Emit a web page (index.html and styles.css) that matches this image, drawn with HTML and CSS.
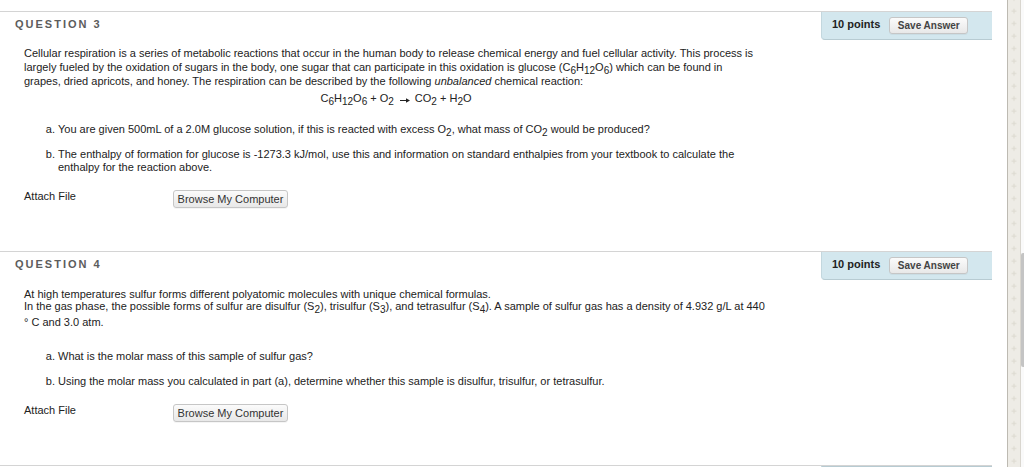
FILE: index.html
```html
<!DOCTYPE html>
<html lang="en">
<head>
<meta charset="utf-8">
<title>Questions</title>
<link rel="stylesheet" href="styles.css">
</head>
<body>
<div class="screen">
  <main class="page">
    <section class="question">
      <header class="q-head">
        <h2 class="q-title">QUESTION 3</h2>
        <div class="q-points"><span class="points">10 points</span><button class="btn btn-save">Save Answer</button></div>
      </header>
      <div class="q-body">
        <p class="prompt">Cellular respiration is a series of metabolic reactions that occur in the human body to release chemical energy and fuel cellular activity. This process is<br>largely fueled by the oxidation of sugars in the body, one sugar that can participate in this oxidation is glucose (C<sub>6</sub>H<sub>12</sub>O<sub>6</sub>) which can be found in<br>grapes, dried apricots, and honey. The respiration can be described by the following <em>unbalanced</em> chemical reaction:</p>
        <p class="equation">C<sub>6</sub>H<sub>12</sub>O<sub>6</sub> + O<sub>2</sub><svg class="arrow" width="10" height="7" viewBox="0 0 10 7" aria-hidden="true"><path d="M0 3.5h7" stroke="#222" stroke-width="1"/><path d="M6 1.2L10 3.5L6 5.8z" fill="#222"/></svg>CO<sub>2</sub> + H<sub>2</sub>O</p>
        <ol class="parts">
          <li>You are given 500mL of a 2.0M glucose solution, if this is reacted with excess O<sub>2</sub>, what mass of CO<sub>2</sub> would be produced?</li>
          <li>The enthalpy of formation for glucose is -1273.3 kJ/mol, use this and information on standard enthalpies from your textbook to calculate the<br>enthalpy for the reaction above.</li>
        </ol>
        <div class="attach"><span class="attach-label">Attach File</span><button class="btn btn-browse">Browse My Computer</button></div>
      </div>
    </section>

    <section class="question">
      <header class="q-head">
        <h2 class="q-title">QUESTION 4</h2>
        <div class="q-points"><span class="points">10 points</span><button class="btn btn-save">Save Answer</button></div>
      </header>
      <div class="q-body">
        <p class="prompt prompt-tight">At high temperatures sulfur forms different polyatomic molecules with unique chemical formulas.<br>In the gas phase, the possible forms of sulfur are disulfur (S<sub>2</sub>), trisulfur (S<sub>3</sub>), and tetrasulfur (S<sub>4</sub>). A sample of sulfur gas has a density of 4.932 g/L at 440</p>
        <p class="prompt-note">° C and 3.0 atm.</p>
        <ol class="parts">
          <li>What is the molar mass of this sample of sulfur gas?</li>
          <li>Using the molar mass you calculated in part (a), determine whether this sample is disulfur, trisulfur, or tetrasulfur.</li>
        </ol>
        <div class="attach"><span class="attach-label">Attach File</span><button class="btn btn-browse">Browse My Computer</button></div>
      </div>
    </section>

    <section class="question question-last">
      <header class="q-head">
        <div class="q-title-stub"></div>
        <div class="q-points"></div>
      </header>
    </section>
  </main>
  <div class="gutter"></div>
  <div class="strip">
    <svg width="12" height="467" viewBox="0 0 12 467" aria-hidden="true">
      <defs>
        <pattern id="plus" x="0" y="5" width="12" height="12.5" patternUnits="userSpaceOnUse">
          <path d="M6 3.5v5M3.5 6h5" stroke="#dcd9d0" stroke-width="1" fill="none"/>
        </pattern>
      </defs>
      <rect x="0" y="0" width="12" height="467" fill="#eeece6"/>
      <rect x="0" y="0" width="12" height="467" fill="url(#plus)"/>
    </svg>
  </div>
  <div class="track"><div class="thumb"></div></div>
</div>
</body>
</html>
```

FILE: styles.css
```css
html, body {
  margin: 0;
  padding: 0;
  height: 467px;
  overflow: hidden;
  background: #ffffff;
}

body {
  font-family: "Liberation Sans", Arial, Helvetica, sans-serif;
  font-size: 11px;
  color: #222222;
}

.screen {
  display: flex;
  height: 467px;
}

.page {
  flex: none;
  width: 992px;
  padding-top: 11px;
}

.question {
  padding-bottom: 43px;
}

.question-last {
  padding-bottom: 0;
}

.q-head {
  display: flex;
  justify-content: space-between;
  align-items: flex-start;
  border-top: 1px solid #d4d4d4;
  height: 28px;
}

.question-last .q-head {
  height: 1px;
}

.q-title {
  margin: 0;
  padding: 6px 0 0 15px;
  font-size: 11px;
  line-height: 12px;
  font-weight: 700;
  letter-spacing: 2px;
  color: #5c5c5c;
}

.q-points {
  box-sizing: border-box;
  width: 171px;
  height: 28px;
  display: flex;
  align-items: flex-start;
  gap: 9px;
  padding: 6px 0 0 10px;
  background: #d3e7ee;
  border-left: 1px solid #c3d7de;
  border-bottom: 1px solid #b7cbd2;
  border-bottom-left-radius: 4px;
}

.question-last .q-points {
  height: 1px;
  padding: 0;
}

.points {
  font-weight: 700;
  font-size: 11px;
  line-height: 12px;
  color: #222222;
}

.btn {
  box-sizing: border-box;
  padding: 0;
  font-family: "Liberation Sans", Arial, Helvetica, sans-serif;
  color: #333333;
  background: linear-gradient(#fbfbfb, #e8e8e8);
  border: 1px solid #c6c6c6;
  border-radius: 3px;
  box-shadow: 0 1px 0 rgba(0, 0, 0, 0.04);
  cursor: pointer;
}

.btn-save {
  width: 79px;
  height: 17px;
  margin-top: -1px;
  font-size: 10px;
  font-weight: 700;
  color: #444444;
}

.btn-browse {
  width: 115px;
  height: 18px;
  margin-top: 1px;
  font-size: 11px;
}

.q-body {
  width: 744px;
  padding-left: 24px;
}

.prompt {
  margin: 6px 0 0;
  line-height: 14px;
  white-space: nowrap;
}

.prompt-tight {
  margin-top: 8px;
  line-height: 12px;
}

.prompt-note {
  margin: 4px 0 0;
  padding-bottom: 4px;
  line-height: 12px;
}

.equation {
  margin: 3px 0 0;
  line-height: 14px;
  text-align: center;
  white-space: nowrap;
}

.arrow {
  display: inline-block;
  vertical-align: -2px;
  margin: 0 5px 0 6px;
}

sub {
  font-size: 10px;
  line-height: 0;
  vertical-align: -3px;
}

.parts {
  margin: 18px 0 0;
  padding-left: 34px;
  line-height: 13px;
  list-style: lower-alpha;
  white-space: nowrap;
}

.parts li + li {
  margin-top: 12px;
}

.attach {
  display: grid;
  grid-template-columns: 149px auto;
  justify-content: start;
  align-items: start;
  margin-top: 15px;
}

.attach-label {
  line-height: 14px;
}

.gutter {
  flex: none;
  width: 15px;
}

.strip {
  flex: none;
  box-sizing: border-box;
  width: 14px;
  border-left: 1px solid #bdbab2;
  border-right: 1px solid #d9d6cf;
  overflow: hidden;
}

.strip svg {
  display: block;
}

.track {
  flex: none;
  width: 3px;
  background: #fafafa;
}

.thumb {
  width: 3px;
  height: 114px;
  margin-top: 253px;
  background: #c4c4c4;
  border-radius: 2px 0 0 2px;
}
```
